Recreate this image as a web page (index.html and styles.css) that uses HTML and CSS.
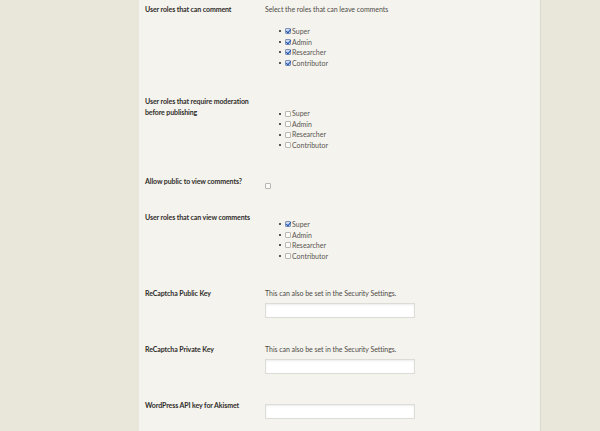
FILE: index.html
```html
<!DOCTYPE html>
<html>
<head>
<meta charset="utf-8">
<link rel="stylesheet" href="styles.css">
</head>
<body>
<div class="panel">
  <div class="row r1">
    <div class="label">User roles that can comment</div>
    <div class="field">
      <p class="desc">Select the roles that can leave comments</p>
      <ul class="roles">
        <li><span class="cb on"></span>Super</li>
        <li><span class="cb on"></span>Admin</li>
        <li><span class="cb on"></span>Researcher</li>
        <li><span class="cb on"></span>Contributor</li>
      </ul>
    </div>
  </div>
  <div class="row r2">
    <div class="label">User roles that require moderation before publishing</div>
    <div class="field">
      <ul class="roles">
        <li><span class="cb"></span>Super</li>
        <li><span class="cb"></span>Admin</li>
        <li><span class="cb"></span>Researcher</li>
        <li><span class="cb"></span>Contributor</li>
      </ul>
    </div>
  </div>
  <div class="row r3">
    <div class="label">Allow public to view comments?</div>
    <div class="field">
      <span class="cb single"></span>
    </div>
  </div>
  <div class="row r4">
    <div class="label">User roles that can view comments</div>
    <div class="field">
      <ul class="roles">
        <li><span class="cb on"></span>Super</li>
        <li><span class="cb"></span>Admin</li>
        <li><span class="cb"></span>Researcher</li>
        <li><span class="cb"></span>Contributor</li>
      </ul>
    </div>
  </div>
  <div class="row r5">
    <div class="label">ReCaptcha Public Key</div>
    <div class="field">
      <p class="desc">This can also be set in the Security Settings.</p>
      <div class="input"></div>
    </div>
  </div>
  <div class="row r6">
    <div class="label">ReCaptcha Private Key</div>
    <div class="field">
      <p class="desc">This can also be set in the Security Settings.</p>
      <div class="input"></div>
    </div>
  </div>
  <div class="row r7">
    <div class="label">WordPress API key for Akismet</div>
    <div class="field">
      <div class="input solo"></div>
    </div>
  </div>
</div>
</body>
</html>
```
FILE: styles.css
```css
html, body {
  margin: 0;
  padding: 0;
  background: #e9e6da;
  height: 100%;
  overflow: hidden;
}
body {
  font-family: Lato, "Open Sans", sans-serif;
  font-size: 7px;
  line-height: 10.5px;
  color: #4a4744;
}
.panel {
  margin-left: 139px;
  width: 402px;
  min-height: 100%;
  background: #f4f3ee;
  border-right: 1px solid #dcdad0;
  box-sizing: border-box;
  padding: 4px 0 0 6px;
}
.row {
  display: grid;
  grid-template-columns: 120px 120px;
  align-items: start;
}
.label {
  color: #302d2a;
  font-weight: 700;
  letter-spacing: -0.1px;
  line-height: 10.5px;
  padding-right: 8px;
}
.desc {
  margin: 0;
  color: #4f4b47;
  letter-spacing: -0.05px;
  white-space: nowrap;
}
.roles {
  list-style: none;
  margin: 11.5px 0 0;
  padding-left: 14px;
  color: #5a5550;
  white-space: nowrap;
}
.roles li {
  height: 10.5px;
  display: flex;
  align-items: center;
}
.roles li::before {
  content: "";
  width: 2px;
  height: 2px;
  border-radius: 50%;
  background: #222;
  margin-right: 4px;
  flex: none;
}
.cb {
  display: inline-block;
  width: 6px;
  height: 6px;
  border: 1px solid #b8b6b0;
  border-radius: 1px;
  background: #fbfbfa;
  box-sizing: border-box;
  margin-right: 1px;
  position: relative;
  flex: none;
}
.cb.on {
  background: #c9d8ef;
  border-color: #7f93b4;
}
.cb.on::after {
  content: "";
  position: absolute;
  left: 1px;
  top: -1px;
  width: 2px;
  height: 4px;
  border: solid #1f4fb0;
  border-width: 0 1.3px 1.3px 0;
  transform: rotate(40deg);
}
.cb.single {
  margin-top: 7.25px;
}
.input {
  width: 150px;
  height: 15px;
  margin-top: 4.75px;
  background: #fff;
  border: 1px solid #dcdcd8;
  box-shadow: inset 0 1px 2px rgba(0,0,0,0.08);
  box-sizing: border-box;
}
.input.solo { margin-top: 4.25px; }

.r2 { margin-top: 28px; }
.r2 .roles { margin-top: 12.25px; }
.r3 { margin-top: 25.75px; }
.r4 { margin-top: 20.5px; }
.r4 .roles { margin-top: 6.75px; }
.r5 { margin-top: 27px; }
.r6 { margin-top: 25.75px; }
.r7 { margin-top: 25.75px; }
```
